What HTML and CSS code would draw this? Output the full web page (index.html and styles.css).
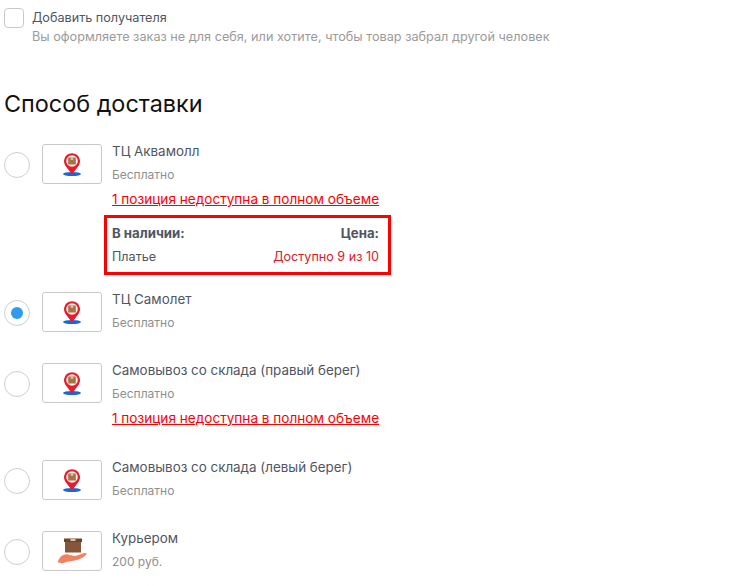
FILE: index.html
```html
<!DOCTYPE html>
<html lang="ru">
<head>
<meta charset="utf-8">
<title>Способ доставки</title>
<link rel="stylesheet" href="styles.css">
</head>
<body>
<svg class="defs" width="0" height="0">
  <symbol id="pin" viewBox="0 0 18 23">
    <ellipse cx="9" cy="21" rx="9" ry="2" fill="#1668dc"/>
    <path d="M9 21.5 L2.2 12.4 A8 8 0 1 1 15.8 12.4 Z" fill="#ea1c2c"/>
    <circle cx="9" cy="8" r="5.8" fill="#f6f0ea"/>
    <rect x="5.2" y="4.4" width="7.6" height="7.2" rx=".6" fill="#a5734a"/>
    <rect x="7.8" y="4.4" width="2.4" height="2.6" fill="#e4bb8c"/>
  </symbol>
  <symbol id="hand" viewBox="0 0 30 26">
    <path d="M7 .5 H25 V4 H7 Z" fill="#6f452a"/>
    <path d="M8 4 H24 V14.5 H8 Z" fill="#85563a"/>
    <rect x="13.5" y="1.2" width="5" height="1.6" fill="#f1e4d4"/>
    <path d="M.5 24 L3 19.5 C5 17 8 16 11 16.4 C14 17 17 18.2 20 17.4 L26 15.4 C28 14.8 30 15 29.6 16 C28 18.4 24 21 20 22 C15 23.4 11 23 8 24.4 C6 25.6 2.5 25.4 .5 24 Z" fill="#f5825f"/>
  </symbol>
</svg>

<main class="page">
  <section class="recipient">
    <span class="checkbox"></span>
    <div>
      <div class="recipient-title">Добавить получателя</div>
      <div class="recipient-note">Вы оформляете заказ не для себя, или хотите, чтобы товар забрал другой человек</div>
    </div>
  </section>

  <h2 class="heading">Способ доставки</h2>

  <div class="options">
    <div class="option">
      <span class="radio"></span>
      <span class="thumb"><svg class="icon-pin"><use href="#pin"/></svg></span>
      <div class="info">
        <div class="name">ТЦ Аквамолл</div>
        <div class="price">Бесплатно</div>
        <a class="warning" href="#">1 позиция недоступна в полном объеме</a>
        <div class="stock">
          <div class="stock-row stock-head"><span>В наличии:</span><span>Цена:</span></div>
          <div class="stock-row"><span>Платье</span><span class="stock-avail">Доступно 9 из 10</span></div>
        </div>
      </div>
    </div>

    <div class="option">
      <span class="radio radio-on"></span>
      <span class="thumb"><svg class="icon-pin"><use href="#pin"/></svg></span>
      <div class="info">
        <div class="name">ТЦ Самолет</div>
        <div class="price">Бесплатно</div>
      </div>
    </div>

    <div class="option">
      <span class="radio"></span>
      <span class="thumb"><svg class="icon-pin"><use href="#pin"/></svg></span>
      <div class="info">
        <div class="name">Самовывоз со склада (правый берег)</div>
        <div class="price">Бесплатно</div>
        <a class="warning" href="#">1 позиция недоступна в полном объеме</a>
      </div>
    </div>

    <div class="option">
      <span class="radio"></span>
      <span class="thumb"><svg class="icon-pin"><use href="#pin"/></svg></span>
      <div class="info">
        <div class="name">Самовывоз со склада (левый берег)</div>
        <div class="price">Бесплатно</div>
      </div>
    </div>

    <div class="option">
      <span class="radio"></span>
      <span class="thumb"><svg class="icon-hand"><use href="#hand"/></svg></span>
      <div class="info">
        <div class="name">Курьером</div>
        <div class="price">200 руб.</div>
      </div>
    </div>
  </div>
</main>
</body>
</html>
```

FILE: styles.css
```css
* { box-sizing: border-box; }
html, body { margin: 0; height: 100%; overflow: hidden; }
body { background: #fff; font-family: Inter, Roboto, "Liberation Sans", sans-serif; color: #50555f; }
.defs { position: absolute; }
.page { padding: 8px 0 0 4px; }

.recipient { display: flex; gap: 8px; }
.checkbox { width: 20px; height: 20px; border: 1px solid #c9c9c9; border-radius: 4px; flex: none; }
.recipient-title { font-size: 12.65px; line-height: 20px; }
.recipient-note { font-size: 12.7px; line-height: 18px; color: #9b9b9b; }

.heading { margin: 42px 0 0; font-size: 23.4px; line-height: 32px; font-weight: 400; color: #111; }

.options { margin-top: 24px; display: flex; flex-direction: column; }
.option { display: flex; align-items: flex-start; padding-bottom: 31px; }
.radio { width: 26px; height: 26px; margin-top: 8px; border: 1px solid #cfcfcf; border-radius: 50%; flex: none; display: flex; align-items: center; justify-content: center; }
.radio-on::after { content: ""; width: 12px; height: 12px; border-radius: 50%; background: #2f9bf0; }
.thumb { width: 60px; height: 40px; margin-left: 12px; border: 1px solid #c9c9c9; border-radius: 3px; flex: none; display: flex; align-items: center; justify-content: center; }
.icon-pin { width: 18px; height: 23px; }
.icon-hand { width: 30px; height: 26px; }

.info { margin-left: 10px; margin-top: -3px; }
.name { font-size: 13.4px; line-height: 20px; }
.price { font-size: 12px; line-height: 16px; margin-top: 6px; color: #8f8f8f; }
.warning { display: block; margin: 6px 0 1px; font-size: 13.6px; line-height: 20px; color: #f00; text-decoration: underline; }

.stock { margin: 6px 0 -14px -8px; width: 287px; height: 60px; border: 3px solid #f00; padding: 7px 9px 0 5px; font-size: 12.6px; }
.stock-row { display: flex; justify-content: space-between; line-height: 16px; }
.stock-head { font-weight: 700; font-size: 13.2px; margin-bottom: 8px; }
.stock-avail { color: #d6202a; }
```
